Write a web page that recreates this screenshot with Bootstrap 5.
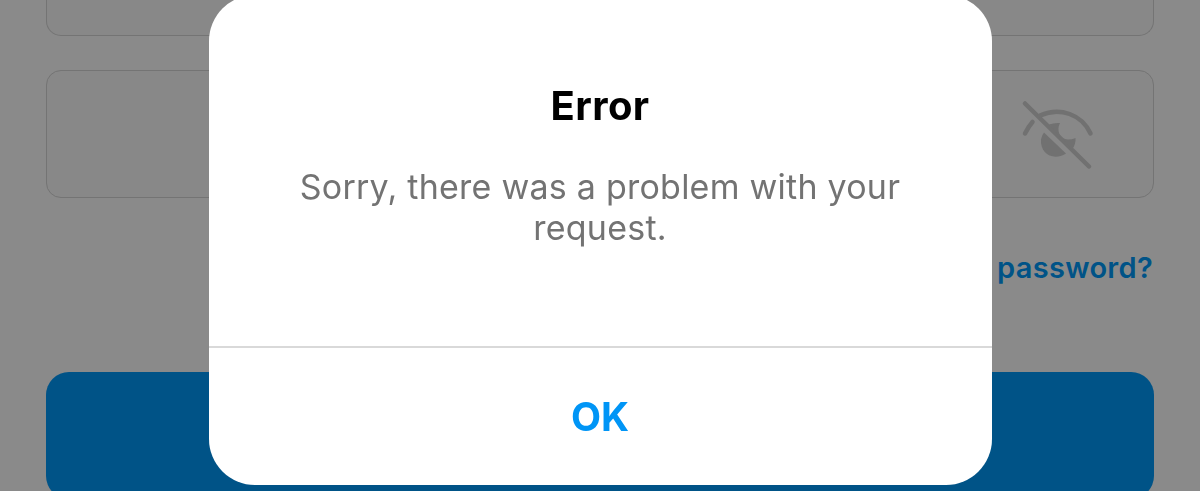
<!DOCTYPE html>
<html lang="en">
<head>
    <meta charset="UTF-8">
    <meta name="viewport" content="width=device-width, initial-scale=1">
    <title>Log in</title>
    <link href="https://cdn.jsdelivr.net/npm/bootstrap@5.3.0/dist/css/bootstrap.min.css" rel="stylesheet">
    <style>
        body {
            height: 491px;
            overflow: hidden;
            background: #8a8a8a;
            font-family: Inter, "Liberation Sans", sans-serif;
        }
        .login-form {
            width: 1108px;
            height: 491px;
        }
        .login-field {
            height: 128px;
            border: 1px solid #747474;
            border-radius: 15px;
            background: #888;
            padding-right: 57px;
        }
        .login-field.first-field {
            height: 36px;
            border-top: 0;
            border-radius: 0 0 15px 15px;
            margin-bottom: 34px;
        }
        .eye-icon {
            width: 80px;
            height: 80px;
        }
        .forgot-link {
            margin-top: 52px;
            font-size: 29px;
            line-height: 36px;
            font-weight: 600;
            letter-spacing: .3px;
            color: #005387;
            padding-right: 1px;
        }
        .login-btn {
            height: 127px;
            margin-top: 86px;
            border-radius: 23px;
            background: #005387;
        }
        .error-modal .modal-dialog {
            width: 783px;
            max-width: none;
            margin: -5px auto 0;
        }
        .error-modal .modal-content {
            height: 490px;
            border: 0;
            border-radius: 46px;
        }
        .error-modal .modal-body {
            padding: 86px 80px 0;
        }
        .error-modal .modal-title {
            font-size: 40px;
            line-height: 50px;
            letter-spacing: .4px;
            color: #000;
        }
        .error-text {
            margin: 35px 0 0;
            font-size: 34px;
            line-height: 41px;
            letter-spacing: .24px;
            color: #737373;
        }
        .error-modal .modal-footer {
            height: 139px;
            border-top: 2px solid #d9d9d9;
        }
        .ok-btn {
            font-size: 39px;
            line-height: 50px;
            color: #0095f6;
        }
    </style>
</head>
<body>
<form class="login-form mx-auto d-flex flex-column">
    <div class="login-field first-field flex-shrink-0"></div>
    <div class="login-field flex-shrink-0 d-flex align-items-center justify-content-end">
        <svg class="eye-icon" viewBox="1 -1.5 80 80" fill="none">
            <g stroke="#717171" stroke-width="4.5" stroke-linecap="round">
                <path d="M10 8L74 71"/>
                <path d="M25 20C45 11 67 19 75.500 38"/>
                <path d="M10 38Q13.500 31 17.500 26.500"/>
            </g>
            <path fill="#717171" d="M29 37L51 58C38 66 25 58 26 44Q27 39 29 37Z"/>
            <path fill="#717171" d="M34 29Q39 27 45 27.500C41 35 45 44 53 44Q57 44 60.500 42.500Q61 49 57 54Z"/>
        </svg>
    </div>
    <div class="forgot-link text-end flex-shrink-0">password?</div>
    <div class="login-btn flex-shrink-0"></div>
</form>

<!-- Error dialog -->
<div class="modal error-modal d-block overflow-hidden" tabindex="-1">
    <div class="modal-dialog">
        <div class="modal-content">
            <div class="modal-body text-center">
                <h5 class="modal-title fw-bold">Error</h5>
                <p class="error-text">Sorry, there was a problem with your request.</p>
            </div>
            <div class="modal-footer p-0 justify-content-center">
                <button type="button" class="btn ok-btn fw-bold p-0 border-0">OK</button>
            </div>
        </div>
    </div>
</div>
<script src="https://cdn.jsdelivr.net/npm/bootstrap@5.3.0/dist/js/bootstrap.bundle.min.js"></script>
</body>
</html>
